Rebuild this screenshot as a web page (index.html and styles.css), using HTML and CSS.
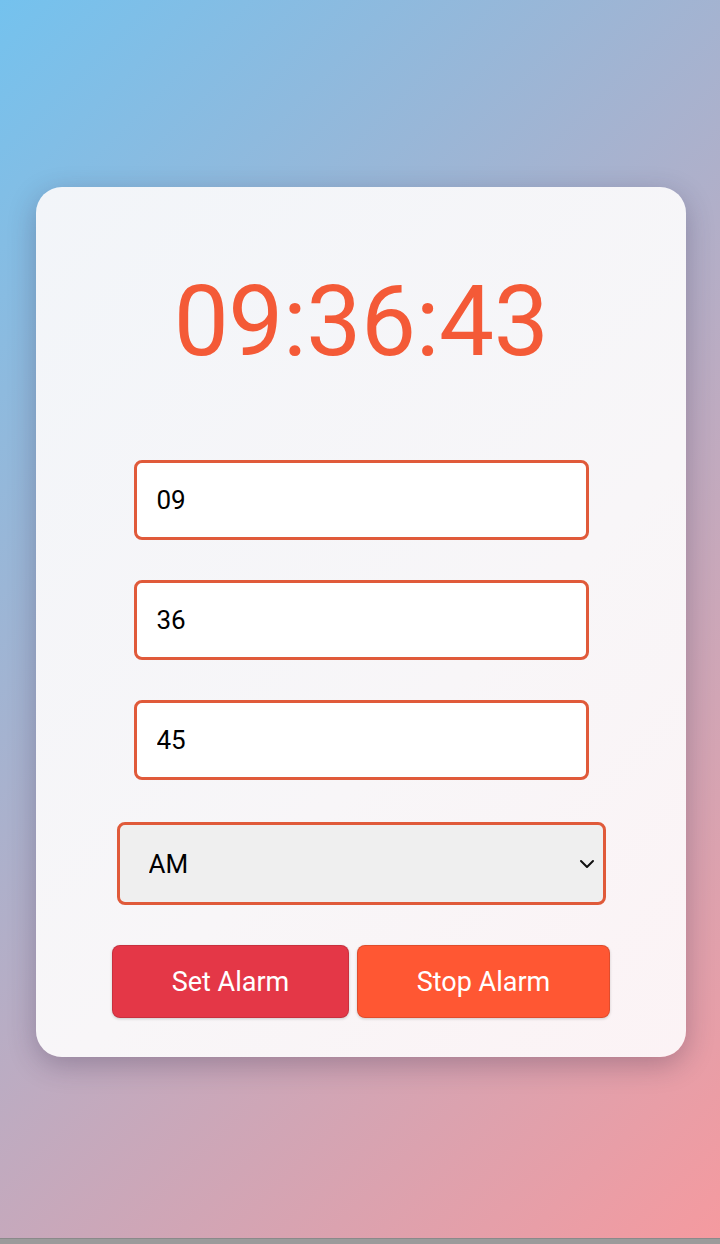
FILE: index.html
```html
<!DOCTYPE html>
<html lang="en">
<head>
<meta charset="utf-8">
<title>Alarm Clock</title>
<link rel="stylesheet" href="styles.css">
</head>
<body>
<main class="screen">
  <section class="card">
    <div class="clock">09:36:43</div>
    <div class="form">
      <input class="field" type="text" value="09">
      <input class="field" type="text" value="36">
      <input class="field field-last" type="text" value="45">
      <div class="select-wrap">
        <select class="ampm">
          <option>AM</option>
          <option>PM</option>
        </select>
        <svg class="chevron" width="16" height="10" viewBox="0 0 16 10" aria-hidden="true"><path d="M2 2l6 6 6-6" fill="none" stroke="#111" stroke-width="2" stroke-linecap="round" stroke-linejoin="round"/></svg>
      </div>
      <div class="actions">
        <button class="btn btn-set">Set Alarm</button>
        <button class="btn btn-stop">Stop Alarm</button>
      </div>
    </div>
  </section>
</main>
<div class="navbar"></div>
</body>
</html>
```

FILE: styles.css
```css
* { box-sizing: border-box; }

html, body {
  margin: 0;
  padding: 0;
}

body {
  width: 720px;
  height: 1244px;
  font-family: Roboto, "Noto Sans", "Liberation Sans", sans-serif;
  display: flex;
  flex-direction: column;
  overflow: hidden;
}

.screen {
  height: 1238px;
  background: linear-gradient(135deg, #74c2ee 0%, #f59a9f 100%);
  padding-top: 187px;
  display: flex;
  justify-content: center;
  align-items: flex-start;
}

.navbar {
  height: 6px;
  background: #9b9b9b;
  border-top: 1px solid #8a8a8a;
}

.card {
  width: 650px;
  height: 870px;
  margin-left: 2px;
  border-radius: 26px;
  background: linear-gradient(135deg, #f2f5f9 0%, #f8f6f8 60%, #fcf3f5 100%);
  box-shadow: 0 8px 28px rgba(40, 30, 60, 0.28);
  padding: 77px 0 0;
  display: flex;
  flex-direction: column;
  align-items: center;
}

.clock {
  font-size: 98px;
  line-height: 116px;
  color: #f45a37;
  letter-spacing: -0.4px;
  text-align: center;
}

.form {
  margin-top: 80px;
  display: flex;
  flex-direction: column;
  align-items: center;
}

.field {
  width: 455px;
  height: 80px;
  border: 3px solid #e05a3a;
  border-radius: 8px;
  background: #ffffff;
  font-family: Roboto, "Noto Sans", sans-serif;
  font-size: 26px;
  color: #000;
  padding: 0 0 0 20px;
  margin-bottom: 40px;
  outline: none;
}

.field-last { margin-bottom: 42px; }

.select-wrap {
  position: relative;
  width: 489px;
  height: 83px;
}

.ampm {
  width: 100%;
  height: 100%;
  appearance: none;
  -webkit-appearance: none;
  border: 3px solid #e05a3a;
  border-radius: 8px;
  background: #efefef;
  font-family: Roboto, "Noto Sans", sans-serif;
  font-size: 26px;
  color: #000;
  padding: 0 0 0 29px;
  outline: none;
}

.chevron {
  position: absolute;
  right: 11px;
  top: 37px;
  pointer-events: none;
}

.actions {
  margin-top: 40px;
  display: flex;
  gap: 8px;
}

.btn {
  height: 73px;
  border: 1px solid rgba(0, 0, 0, 0.12);
  border-radius: 8px;
  color: #ffffff;
  font-family: Roboto, "Noto Sans", sans-serif;
  font-size: 27px;
  box-shadow: 0 1px 3px rgba(0, 0, 0, 0.18);
  cursor: pointer;
}

.btn-set {
  width: 237px;
  background: #e43747;
}

.btn-stop {
  width: 253px;
  background: #ff5733;
}
```
